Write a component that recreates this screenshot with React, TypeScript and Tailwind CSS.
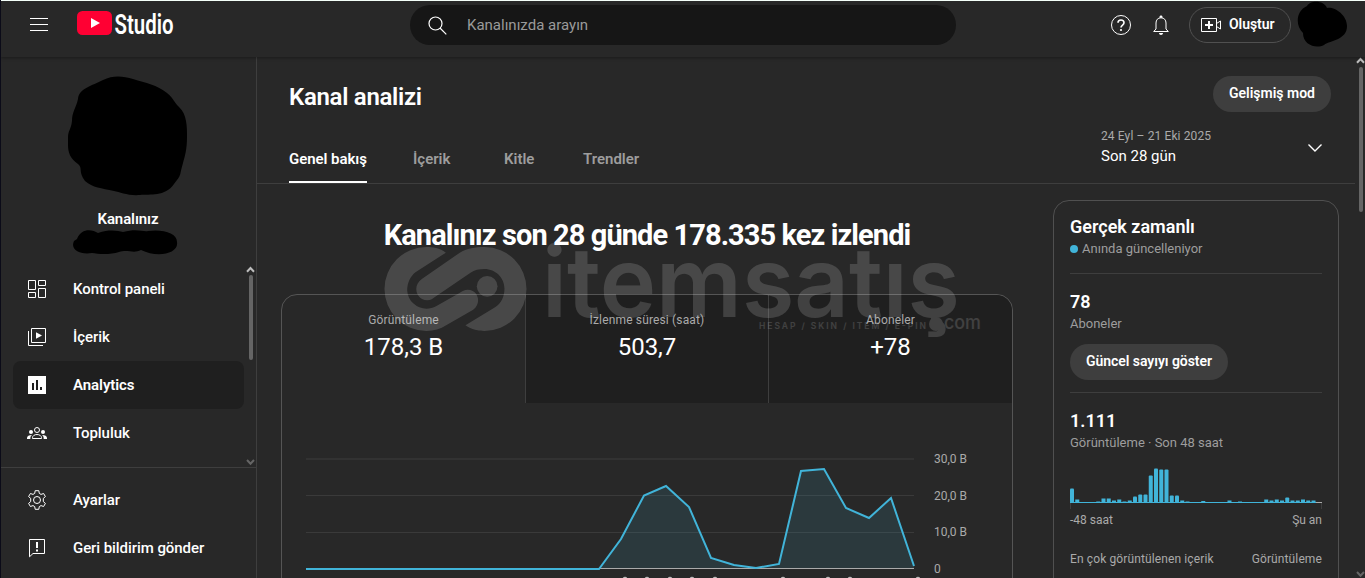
import React from 'react';

const views = [14, 3, 0.5, 0.5, 0.5, 1, 4, 4, 2, 3, 1, 2, 6, 8, 8, 27, 34, 33, 33, 7, 7, 2, 1, 0.5, 0.5, 1.5, 0.5, 0.5, 0.5, 0.5, 2, 0.5, 1, 0.5, 0.5, 0.5, 0.5, 3, 2, 3, 2, 5, 2, 2, 3, 2, 2, 0];

const linePoints = '0,119 293,119 315,89 338,45.5 360,36 383,57 405,108 428,115 450,118 473,114 495,21 518,19 540,58 563,68 585,48 608,116';

const markers = [319, 341, 364, 386, 409, 477, 522, 544, 612];

const HamburgerIcon = () => (
  <svg width="18" height="14" viewBox="0 0 18 14" fill="none" stroke="#fff">
    <path d="M0 1.5h18M0 7.5h18M0 13.5h18" />
  </svg>
);

const DashboardIcon = () => (
  <svg width="20" height="20" viewBox="0 0 20 20" fill="none" stroke="#fff">
    <path d="M1.5 1.5h7v9h-7zM11.500 1.500h7v5h-7zM11.500 9.500h7v9h-7zM1.500 13.500h7v5h-7z" />
  </svg>
);

const ContentIcon = () => (
  <svg width="20" height="20" viewBox="0 0 20 20" fill="none" stroke="#fff">
    <path d="M4.500 1.500h14v14h-14z" />
    <path d="M1.500 4v14.500h14.500" />
    <path d="M9 5.300v6.400l6-3.200z" fill="#fff" stroke="none" />
  </svg>
);

const AnalyticsIcon = () => (
  <svg width="20" height="20" viewBox="0 0 20 20">
    <path d="M1 1h18v18H1z" fill="#fff" />
    <path d="M5 8h2v7H5zM9 5h2v10H9zM13 12h2v3h-2z" fill="#1f1f1f" />
  </svg>
);

const CommunityIcon = () => (
  <svg width="20" height="20" viewBox="0 0 20 20" fill="none" stroke="#fff">
    <circle cx="10" cy="7" r="2.500" />
    <path d="M5.500 15.500v-.8c0-1.800 2-3.200 4.500-3.200s4.500 1.400 4.500 3.200v.8z" />
    <g fill="#fff" stroke="none">
      <circle cx="4" cy="9" r="2" />
      <circle cx="16" cy="9" r="2" />
      <path d="M0 16v-1c0-1.700 2-3 5-3-1.200.8-1.700 1.700-1.700 4zM20 16v-1c0-1.700-2-3-5-3 1.200.8 1.700 1.700 1.700 4z" />
    </g>
  </svg>
);

const SettingsIcon = () => (
  <svg width="20" height="20" viewBox="0 0 20 20" fill="none" stroke="#fff">
    <circle cx="10" cy="10" r="3.500" />
    <path d="M8.200.7h3.600l.5 2.700 1.700 1 2.600-.9 1.800 3.100-2.100 1.800v3.200l2.100 1.800-1.800 3.100-2.600-.9-1.700 1-.5 2.700H8.200l-.5-2.700-1.700-1-2.600.9-1.800-3.100 2.100-1.800V8.400L1.600 6.600l1.800-3.100 2.600.9 1.700-1z" strokeLinejoin="round" />
  </svg>
);

const FeedbackIcon = () => (
  <svg width="20" height="20" viewBox="0 0 20 20" fill="none" stroke="#fff">
    <path d="M2.500 1.500h15v14H6l-3.500 3.300z" />
    <path d="M9 4h2v6H9zM9 11.500h2v2H9z" fill="#fff" stroke="none" />
  </svg>
);

const NavItem = ({ icon, label, active = false }: { icon: React.ReactNode; label: string; active?: boolean }) => (
  <div className={`flex h-12 w-[231px] items-center gap-[26px] rounded-lg pl-3.5 text-[15px] tracking-[-0.07px] text-white ${active ? 'bg-[#1f1f1f] font-semibold' : 'font-medium'}`}>
    {icon}
    <span>{label}</span>
  </div>
);

const Arrow = ({ down = false, color }: { down?: boolean; color: string }) => (
  <svg width="9" height="7" viewBox="0 0 9 7" fill="none" stroke={color} strokeWidth="2">
    <path d={down ? 'M1 1l3.500 3.700L8 1' : 'M1 5.700L4.500 2 8 5.700'} />
  </svg>
);

const Header = () => (
  <header className="relative z-10 flex h-[57px] shrink-0 items-start border-t border-[#f4fff9] bg-[#282828] pl-[29px] shadow-[0_1px_3px_rgba(0,0,0,0.35)]">
    <div className="mt-4 flex w-[47px]">
      <HamburgerIcon />
    </div>
    <div className="flex w-[333px]">
      <svg width="104" height="44" viewBox="0 0 104 44">
        <rect y="10" width="35" height="24" rx="5.500" fill="#ff0033" />
        <path d="M14 17v10l9-5z" fill="#fff" />
        <text x="37.500" y="32.500" textLength="59" lengthAdjust="spacingAndGlyphs" fill="#fff" fontSize="28" fontWeight="600" className="font-['Roboto']">Studio</text>
      </svg>
    </div>
    <div className="mt-1 flex h-10 w-[546px] items-center gap-[20px] rounded-full bg-[#161616] pl-[18px]">
      <svg width="19" height="19" viewBox="0 0 19 19" fill="none" stroke="#fff" strokeWidth="1.200">
        <circle cx="7.500" cy="7.500" r="6.500" />
        <path d="M12 12l6.300 6.300" />
      </svg>
      <span className="text-[15px] tracking-[0px] text-[#9a9a9a]">Kanalınızda arayın</span>
    </div>
    <div className="ml-[154px] mt-3.5 flex gap-[21px]">
      <svg width="22" height="22" viewBox="0 0 22 22" fill="none" stroke="#fff">
        <circle cx="11" cy="10" r="9.500" />
        <path d="M8 7.800c0-3.700 6-3.700 6 0 0 2.200-3 2.300-3 4.700" strokeWidth="1.600" />
        <circle cx="11" cy="15" r="1.100" fill="#fff" stroke="none" />
      </svg>
      <svg width="16" height="21" viewBox="0 0 16 21" fill="none" stroke="#fff">
        <path d="M.7 16.500h14.600L13 14V8c0-3-1.800-5.200-5-5.200S3 5 3 8v6z" />
        <path d="M6.500 2.800V2C6.500 0 9.500 0 9.500 2v.8zM6 18h4c0 2.500-4 2.500-4 0z" fill="#fff" stroke="none" />
      </svg>
    </div>
    <div className="ml-5 mt-1.5 flex h-9 w-[102px] items-center gap-[7px] rounded-full border border-[#505050] pl-[11px]">
      <svg width="21" height="16" viewBox="0 0 21 16" fill="none" stroke="#fff">
        <path d="M.5 1.500h15v13H.5zM15.500 6.500l4-2.500v8l-4-2.500z" />
        <path d="M8 4v8M4 8h8" strokeWidth="2" />
      </svg>
      <span className="pb-0.5 text-[14px] font-semibold tracking-[-0.05px] text-white">Oluştur</span>
    </div>
    <svg className="ml-1.5" width="52" height="48" viewBox="0 0 52 48">
      <path d="M10 5C13-1 27-1 30 7C36 5 50 13 50 25C50 39 34 39 27 44C19 48 6 44 6 32C-2 24-1 10 10 5Z" fill="#000" />
    </svg>
  </header>
);

const Sidebar = () => (
  <aside className="flex w-[256px] shrink-0 flex-col border-r border-[#3e3e3e]">
    <div className="flex h-[209px] shrink-0 flex-col items-center pr-px pt-[19px]">
      <svg width="120" height="120" viewBox="0 0 120 120">
        <path d="M10 23C11 12 24 10 35 4C45-1 55 0 65 3C78 7 89 9 99 17C107 24 105 25 111 31C119 38 119 51 119 61C119 73 117 80 115 87C111 101 114 98 106 108C97 121 82 118 72 119C60 120 52 116 46 115C33 112 25 112 17 105C10 96 15 92 10 88C-1 80 0 73 0 62C0 54 3 54 4 45C4 36 8 32 10 23Z" fill="#000" />
      </svg>
      <div className="mt-[13px] text-[15px] font-semibold leading-5 tracking-[-0.1px] text-white">Kanalınız</div>
      <svg className="ml-[-7px] mt-px" width="106" height="26" viewBox="0 0 106 26">
        <path d="M5 9C9-2 20-1 26 3C38-1 46 1 51 2C65-2 71 2 76 1C91-1 105 3 105 12C107 24 85 28 69 20C61 24 56 19 47 22C38 25 26 24 20 23C7 25-2 19 2 11Z" fill="#000" />
      </svg>
    </div>
    <div className="flex h-[202px] justify-between border-b border-[#3e3e3e] pl-3 pr-px">
      <div className="h-[195px] overflow-hidden">
        <div className="mt-[-1px]">
          <NavItem icon={<DashboardIcon />} label="Kontrol paneli" />
          <NavItem icon={<ContentIcon />} label="İçerik" />
          <NavItem icon={<AnalyticsIcon />} label="Analytics" active />
          <NavItem icon={<CommunityIcon />} label="Topluluk" />
        </div>
      </div>
      <div className="flex flex-col items-center">
        <Arrow color="#bdbdbd" />
        <div className="mt-0.5 h-[85px] w-1 rounded-full bg-[#656565]" />
        <div className="mb-[1px] mt-auto flex">
          <Arrow down color="#656565" />
        </div>
      </div>
    </div>
    <div className="pl-3 pt-2">
      <NavItem icon={<SettingsIcon />} label="Ayarlar" />
      <NavItem icon={<FeedbackIcon />} label="Geri bildirim gönder" />
    </div>
  </aside>
);

const Toolbar = () => (
  <div className="flex h-[127px] w-[1098px] shrink-0 justify-between border-b border-[#3e3e3e] pl-8">
    <div className="flex flex-col">
      <h1 className="mt-6 text-[24px] font-semibold leading-8 tracking-[-0.3px] text-white">Kanal analizi</h1>
      <div className="mt-auto flex h-12 whitespace-nowrap text-[15px] font-semibold leading-[48px] text-[#9d9d9d]">
        <span className="w-[78px] border-b-2 border-white tracking-[-0.05px] text-white">Genel bakış</span>
        <span className="ml-[46px] w-[91px]">İçerik</span>
        <span className="w-[79px]">Kitle</span>
        <span>Trendler</span>
      </div>
    </div>
    <div className="flex w-[254px] flex-col pr-6">
      <button className="mt-[19px] h-9 w-[118px] self-end rounded-full bg-[#3e3e3e] pb-0.5 text-[14px] font-semibold text-white">Gelişmiş mod</button>
      <div className="mt-4 flex items-center justify-between pr-2">
        <div>
          <div className="text-[12px] leading-4 tracking-[0.12px] text-[#aaa]">24 Eyl – 21 Eki 2025</div>
          <div className="text-[15px] leading-6 text-white">Son 28 gün</div>
        </div>
        <svg width="16" height="10" viewBox="0 0 16 10" fill="none" stroke="#fff" strokeWidth="1.400">
          <path d="M1.500 1.500L8 8l6.500-6.500" />
        </svg>
      </div>
    </div>
  </div>
);

const Metric = ({ label, value }: { label: string; value: string }) => (
  <div className="flex flex-1 flex-col items-center pt-4">
    <div className="text-[12px] leading-[18px] tracking-[0.15px] text-[#aaa]">{label}</div>
    <div className="mt-0.5 text-[24px] leading-8 text-white">{value}</div>
  </div>
);

const OverviewCard = () => (
  <div className="h-[320px] w-[732px] rounded-t-2xl border border-[#555]">
    <div className="flex h-[108px]">
      <Metric label="Görüntüleme" value="178,3 B" />
      <div className="flex w-[487px] rounded-tr-2xl border-l border-[#3e3e3e] bg-[#1f1f1f]">
        <div className="flex w-[242px]">
          <Metric label="İzlenme süresi (saat)" value="503,7" />
        </div>
        <div className="flex w-[244px] border-l border-[#3e3e3e]">
          <Metric label="Aboneler" value="+78" />
        </div>
      </div>
    </div>
    <div className="flex gap-[14px] pl-6 pt-[47px]">
      <svg width="614" height="130" viewBox="0 0 614 130" fill="none">
        <path d="M0 9h608" stroke="#323232" strokeWidth="2" />
        <path d="M0 45.500h608M0 82.500h608" stroke="#3a3a3a" />
        <polygon points={`${linePoints} 608,119`} fill="#41b4d9" fillOpacity="0.12" />
        <path d="M0 118.500h608" stroke="#aaa" />
        <polyline points={linePoints} stroke="#41b4d9" strokeWidth="2" />
        {markers.map((x) => (
          <circle key={x} cx={x} cy="129" r="2.300" fill="#bbb" />
        ))}
      </svg>
      <div className="text-[12px] leading-[36.700px] text-[#aaa]">
        <div className="mt-[-9px]">30,0 B</div>
        <div>20,0 B</div>
        <div>10,0 B</div>
        <div>0</div>
      </div>
    </div>
  </div>
);

const RealtimeCard = () => (
  <div className="mt-4 h-[420px] w-[286px] rounded-t-2xl border border-[#505050] px-4 pt-3.5">
    <h2 className="text-[18px] font-semibold leading-6 text-white">Gerçek zamanlı</h2>
    <div className="flex items-center gap-1 text-[13px] leading-5 text-[#9d9d9d]">
      <span className="h-2 w-2 rounded-full bg-[#41b4d9]" />
      Anında güncelleniyor
    </div>
    <div className="mt-3.5 border-t border-[#3e3e3e] pt-4">
      <div className="text-[18px] font-semibold leading-6 text-white">78</div>
      <div className="text-[13px] leading-5 text-[#9d9d9d]">Aboneler</div>
      <button className="mt-2.5 h-9 w-[158px] rounded-full bg-[#3e3e3e] pb-0.5 text-[14px] font-semibold tracking-[-0.05px] text-white">Güncel sayıyı göster</button>
    </div>
    <div className="mt-3 border-t border-[#3e3e3e] pt-4">
      <div className="text-[18px] font-semibold leading-6 text-white">1.111</div>
      <div className="text-[13px] leading-5 text-[#9d9d9d]">Görüntüleme · Son 48 saat</div>
      <svg className="mt-3.5" width="252" height="44" viewBox="0 0 252 44">
        <path d="M0 35.500h252" stroke="#aaa" />
        <path d="M.5 36v6M251.500 36v6" stroke="#3e3e3e" />
        <path d="M0 35.500h246" stroke="#41b4d9" />
        {views.map((v, i) => (
          <rect key={i} x={i * 5.25} y={35.5 - v} width="4" height={v} rx={v > 4 ? 1 : 0} fill="#41b4d9" />
        ))}
      </svg>
    </div>
    <div className="mt-[-1px] flex justify-between text-[12px] leading-5 text-[#aaa]">
      <span>-48 saat</span>
      <span>Şu an</span>
    </div>
    <div className="mt-[19px] flex justify-between text-[12px] leading-5 tracking-[0.12px] text-[#aaa]">
      <span>En çok görüntülenen içerik</span>
      <span>Görüntüleme</span>
    </div>
  </div>
);

const Watermark = () => (
  <svg className="pointer-events-none absolute left-[379px] top-[242px]" width="610" height="110" viewBox="0 0 610 110">
    <g fill="#fff" opacity="0.15">
      <g transform="translate(0.5 0) scale(0.3333)">
        <path d="M196 32C178 18 155 15 138 15A126 126 0 0 0 138 267C160 267 180 261 197 250L278 203C304 185 294 143 262 143C252 143 245 148 237 153L168 192C158 198 148 200 138 200A58 58 0 0 1 80 145C80 122 90 102 106 90Z" />
        <path d="M255 250C273 264 295 267 312 267A126 126 0 0 0 312 15C285 15 258 19 238 32L124 111C94 132 108 175 140 175C150 175 155 171 162 166L270 92C282 84 295 81 312 81C346 81 372 108 372 140C372 163 362 184 345 195Z" />
        <circle cx="320" cy="133" r="31" />
      </g>
      <text x="162" y="75" textLength="418" lengthAdjust="spacingAndGlyphs" fontSize="98" fontWeight="600" className="font-['Inter']">itemsatış</text>
      <circle cx="556" cy="82" r="7" />
      <text x="379" y="87" textLength="167" fontSize="8.500" fontWeight="600" className="font-['Inter']">HESAP / SKIN / ITEM / E-PIN</text>
      <text x="564" y="87" textLength="37" lengthAdjust="spacingAndGlyphs" fontSize="19" fontWeight="500" className="font-['Inter']">com</text>
    </g>
  </svg>
);

export default function App() {
  return (
    <div className="relative flex h-[578px] w-[1365px] flex-col overflow-hidden border-l border-[#0b0b18] bg-[#282828] font-['Roboto',sans-serif]">
      <Header />
      <div className="flex h-[521px]">
        <Sidebar />
        <main className="flex flex-1 flex-col">
          <Toolbar />
          <div className="flex pl-6">
            <div className="flex w-[772px] flex-col">
              <h2 className="mt-[30px] w-[732px] text-center text-[29px] font-bold leading-[42px] tracking-[-0.92px] text-white">
                Kanalınız son 28 günde 178.335 kez izlendi
              </h2>
              <div className="mt-[38px]">
                <OverviewCard />
              </div>
            </div>
            <RealtimeCard />
          </div>
        </main>
        <div className="ml-[-10px] flex w-[9px] flex-col items-center">
          <Arrow color="#bdbdbd" />
          <div className="mt-[3px] h-[145px] w-1 rounded-full bg-[#656565]" />
          <div className="mt-auto flex">
            <Arrow down color="#656565" />
          </div>
        </div>
      </div>
      <Watermark />
    </div>
  );
}
